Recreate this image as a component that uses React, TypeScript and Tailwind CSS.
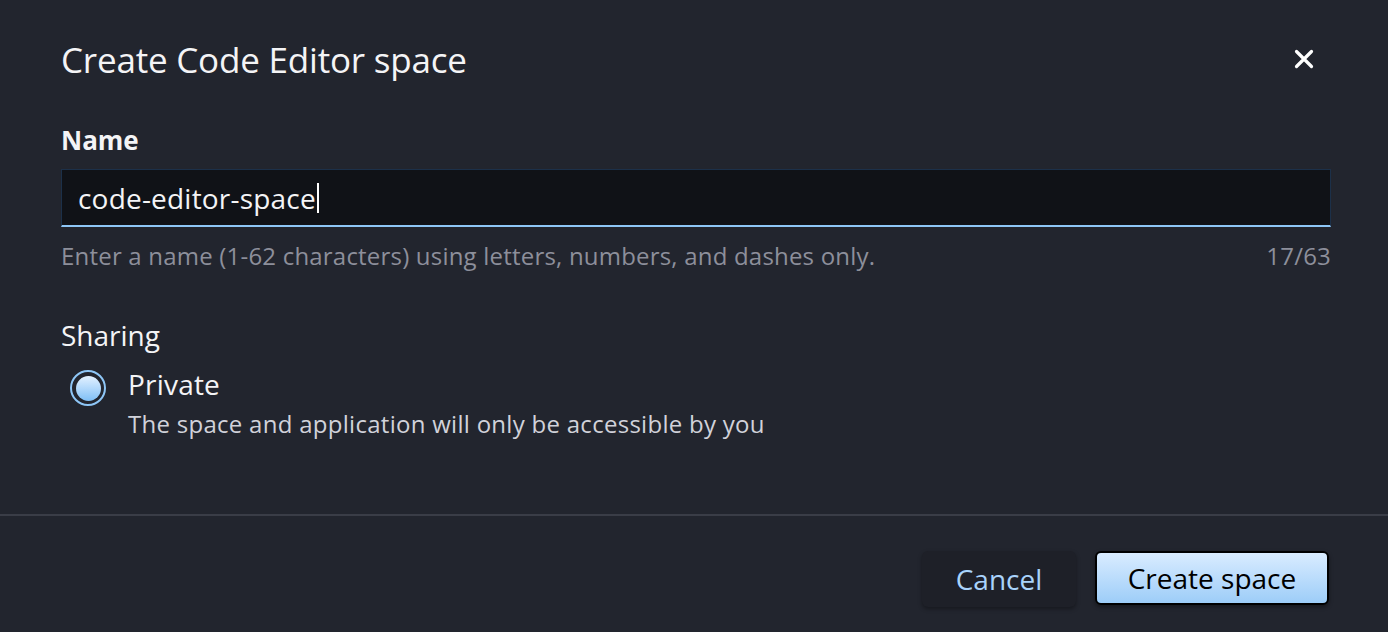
import React from 'react';

const App: React.FC = () => {
  return (
    <div
      className="w-[1388px] h-[632px] bg-[#22252e] text-white flex flex-col overflow-hidden"
      style={{ fontFamily: '"Open Sans", "Noto Sans", sans-serif' }}
    >
      {/* Header */}
      <header className="flex items-center justify-between pl-[61px] pr-[68px] pt-[38px] h-[85px]">
        <h1 className="text-[35px] leading-[44px] font-normal text-[#f4f4f6] tracking-[-0.2px] -mt-[3px]">Create Code Editor space</h1>
        <button className="size-8 flex items-center justify-center text-white -mt-[5px]">
          <svg width="20" height="20" viewBox="0 0 20 20" fill="none">
            <path d="M2.5 2.5 L17.5 17.5 M17.5 2.5 L2.5 17.5" stroke="currentColor" strokeWidth="3.2" strokeLinecap="round" />
          </svg>
        </button>
      </header>

      {/* Body */}
      <main className="flex flex-col px-[61px] pr-[57px] pt-[38px] h-[429px]">
        <label className="text-[26px] leading-[34px] font-bold text-[#f4f4f6]">Name</label>
        <div className="mt-[12px] h-[58px] bg-[#101217] border border-[#1c3049] border-b-2 border-b-[#8ec6f6] flex items-center pl-[16px]">
          <span className="text-[28px] leading-[36px] text-[#f4f4f6] tracking-[0.2px]">code-editor-space</span>
          <span className="w-[2px] h-[30px] bg-white ml-[1px]" />
        </div>
        <div className="flex justify-between mt-[13px] text-[24px] leading-[32px] text-[#8d8f9b] tracking-[0.2px]">
          <span>Enter a name (1-62 characters) using letters, numbers, and dashes only.</span>
          <span>17/63</span>
        </div>

        <h2 className="mt-[46px] text-[28px] leading-[34px] text-[#f4f4f6]">Sharing</h2>
        <div className="mt-[14px] flex items-start gap-[22px] pl-[9px]">
          <span className="mt-[4px] size-[36px] rounded-full border-[2.5px] border-[#8ec6f6] flex items-center justify-center shrink-0">
            <span className="size-[25px] rounded-full bg-gradient-to-b from-[#e3f1ff] to-[#7ebff6]" />
          </span>
          <div className="flex flex-col">
            <span className="text-[28px] leading-[36px] text-[#f4f4f6] tracking-[0.2px]">Private</span>
            <span className="mt-[6px] text-[24px] leading-[32px] text-[#d1d2da] tracking-[0.28px]">The space and application will only be accessible by you</span>
          </div>
        </div>
      </main>

      {/* Footer */}
      <div className="h-[2px] bg-[#3a3d47]" />
      <footer className="flex justify-end items-start gap-[19px] pr-[59px] pt-[35px]">
        <button className="w-[154px] h-[56px] rounded-[6px] bg-[#1e2028] shadow-[0_2px_4px_rgba(0,0,0,0.35)] text-[28px] text-[#a9d3fb]">
          Cancel
        </button>
        <button className="w-[234px] h-[54px] rounded-[6px] border-2 border-black bg-gradient-to-b from-[#d9ecff] to-[#9dcdf8] text-[28px] text-black shadow-[0_2px_4px_rgba(0,0,0,0.4)]">
          Create space
        </button>
      </footer>
    </div>
  );
};

export default App;
